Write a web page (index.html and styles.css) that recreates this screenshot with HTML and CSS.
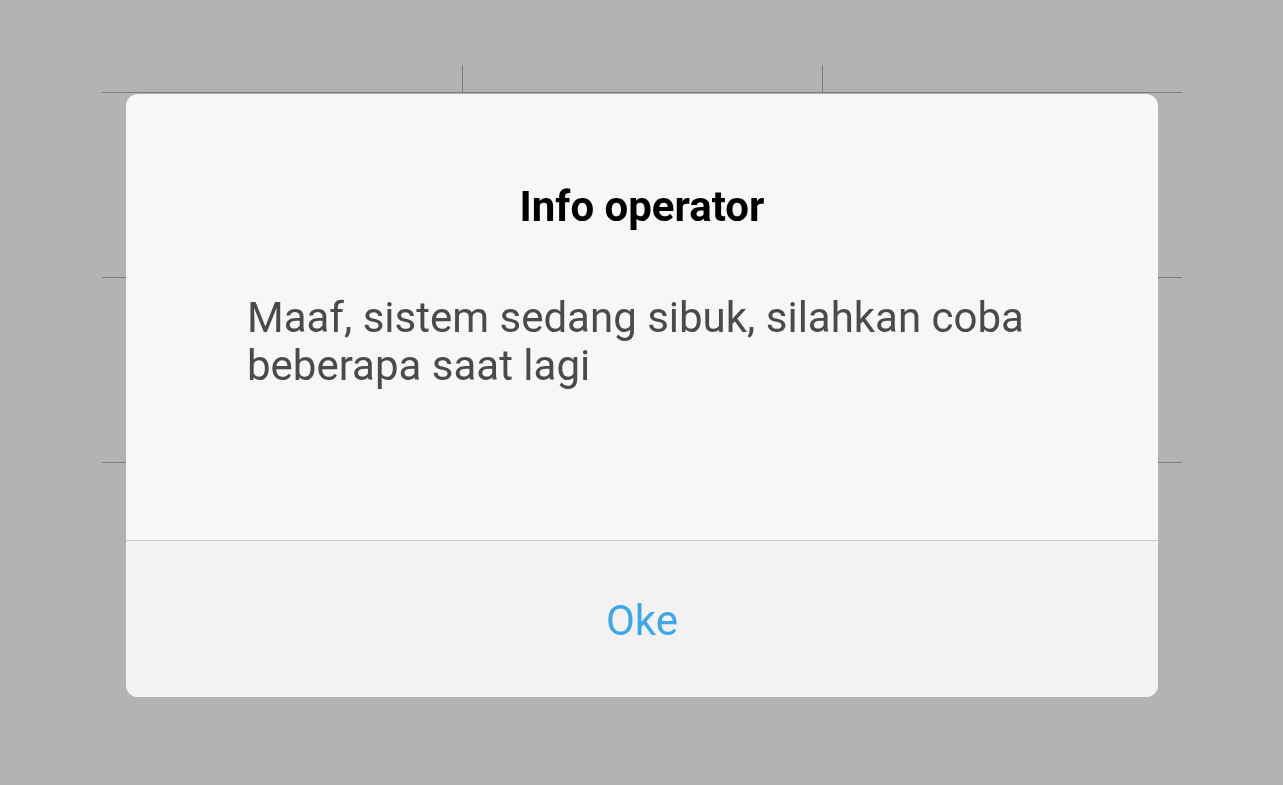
FILE: index.html
```html
<!DOCTYPE html>
<html>
<head>
<meta charset="utf-8">
<link rel="stylesheet" href="styles.css">
</head>
<body>
<div class="table">
  <div class="head-row">
    <div class="cell"></div>
    <div class="cell sep"></div>
    <div class="cell sep"></div>
  </div>
  <div class="row"></div>
  <div class="row"></div>
</div>
<div class="overlay">
  <div class="dialog">
    <div class="content">
      <h1 class="title">Info operator</h1>
      <p class="message">Maaf, sistem sedang sibuk, silahkan coba beberapa saat lagi</p>
    </div>
    <div class="actions">
      <span class="ok">Oke</span>
    </div>
  </div>
</div>
</body>
</html>
```
FILE: styles.css
```css
html, body {
  margin: 0;
  padding: 0;
  background: #b3b3b3;
  width: 1283px;
  height: 785px;
  overflow: hidden;
  font-family: Roboto, "Noto Sans", "Liberation Sans", sans-serif;
}
.table {
  margin: 65px 0 0 102px;
  width: 1080px;
}
.head-row {
  display: grid;
  grid-template-columns: 360px 360px 360px;
  height: 27px;
  border-bottom: 1px solid #7c7c7c;
}
.cell.sep {
  border-left: 1px solid #7c7c7c;
}
.row {
  height: 184px;
  border-bottom: 1px solid #7c7c7c;
}
.overlay {
  position: fixed;
  left: 126px;
  top: 94px;
}
.dialog {
  width: 1032px;
  height: 603px;
  border-radius: 12px;
  overflow: hidden;
  background: #f7f7f7;
  display: flex;
  flex-direction: column;
}
.content {
  height: 447px;
  padding: 89px 121px 0;
  box-sizing: border-box;
  border-bottom: 1px solid #c9c9c9;
}
.title {
  margin: 0;
  font-size: 42px;
  line-height: 48px;
  font-weight: 700;
  color: #000;
  text-align: center;
}
.message {
  margin: 63px 0 0;
  font-size: 42px;
  line-height: 48px;
  color: #4a4a4a;
}
.actions {
  flex: 1;
  background: #f2f2f2;
  display: flex;
  align-items: center;
  justify-content: center;
}
.ok {
  font-size: 42px;
  line-height: 48px;
  color: #3ea6ea;
  margin-top: 4px;
}
```
